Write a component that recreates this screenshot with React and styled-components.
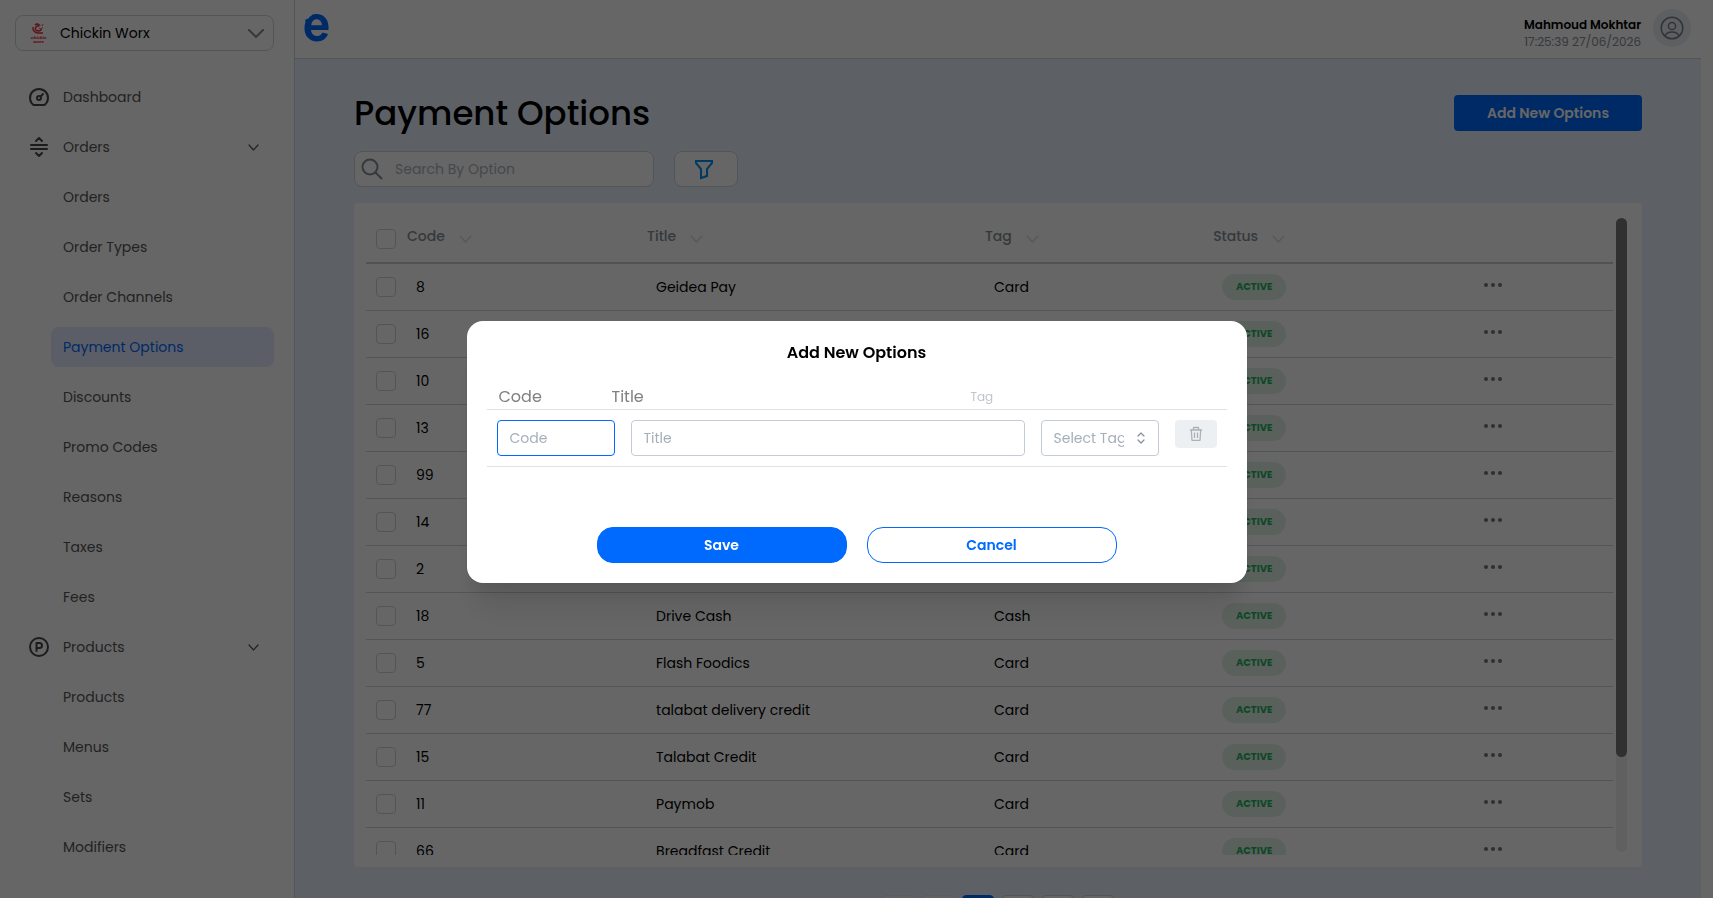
import React from "react";
import styled, { createGlobalStyle } from "styled-components";

const Global = createGlobalStyle`
  *, *::before, *::after { box-sizing: border-box; }
  html, body { margin: 0; background: #fff; }
  body, button, input, select {
    font-family: Poppins, Inter, "Open Sans", sans-serif;
    font-size: 14px;
  }
  button { cursor: pointer; }
`;

const Shell = styled.div`
  display: grid;
  grid-template-columns: 295px minmax(0, 1fr);
  height: 100vh;
  padding-right: 12px;
  overflow: hidden;
  background: #fff;
`;

/* ---------- sidebar ---------- */

const Sidebar = styled.aside`
  padding: 15px 20px 0 15px;
  border-right: 1px solid #ced4da;
  overflow: hidden;
`;

const BrandPicker = styled.button`
  display: flex;
  align-items: center;
  width: 100%;
  height: 36px;
  margin-bottom: 26px;
  padding: 0 9px 0 12px;
  border: 1px solid #ced4da;
  border-radius: 8px;
  background: #fff;
  color: #000;
  text-align: left;
`;

const BrandName = styled.span`
  flex: 1;
  margin-left: 12px;
`;

const Nav = styled.nav`
  display: flex;
  flex-direction: column;
  gap: 10px;
`;

const NavItem = styled.a`
  display: flex;
  align-items: center;
  height: 40px;
  margin-left: ${(p) => (p.$sub ? 36 : 0)}px;
  padding: ${(p) => (p.$sub ? "0 12px" : "0 15px 0 12px")};
  border-radius: 8px;
  background: ${(p) => (p.$active ? "#e3ebff" : "transparent")};
  color: ${(p) => (p.$active ? "#006aff" : "#555555")};
  text-decoration: none;
`;

const NavIcon = styled.span`
  display: flex;
  justify-content: center;
  width: 24px;
  margin-right: 12px;
`;

const NavLabel = styled.span`
  flex: 1;
`;

/* ---------- main column ---------- */

const Main = styled.div`
  display: flex;
  flex-direction: column;
  min-width: 0;
  overflow: hidden;
`;

const TopBar = styled.header`
  display: flex;
  align-items: center;
  flex: none;
  height: 59px;
  padding: 0 10px 0 9px;
  border-bottom: 1px solid #ced4da;
  background: #fff;
`;

const LogoLink = styled.a`
  display: flex;
  flex: 1;
  padding-bottom: 2px;
`;

const UserText = styled.div`
  margin-right: 12px;
  padding-top: 8px;
  text-align: right;
  font-size: 12px;
  line-height: 17px;
`;

const UserName = styled.div`
  font-weight: 600;
  color: #000;
`;

const UserTime = styled.div`
  color: #868e96;
`;

const Avatar = styled.button`
  display: grid;
  place-items: center;
  width: 38px;
  height: 38px;
  margin-bottom: 2px;
  padding: 0;
  border: 0;
  border-radius: 50%;
  background: #e9eef0;
`;

const Content = styled.main`
  flex: 1;
  min-height: 0;
  padding: 36px 59px 0;
  overflow: hidden;
  background: #e9f2ff;
`;

const TitleRow = styled.div`
  display: flex;
  align-items: center;
  justify-content: space-between;
  height: 36px;
  margin-bottom: 20px;
`;

const PageTitle = styled.h1`
  margin: 0;
  font-size: 34px;
  font-weight: 500;
  line-height: 36px;
  color: #000;
`;

const AddButton = styled.button`
  width: 188px;
  height: 36px;
  border: 0;
  border-radius: 4px;
  background: #006aff;
  color: #fff;
  font-weight: 600;
`;

const Tools = styled.div`
  display: flex;
  gap: 20px;
  margin-bottom: 16px;
`;

const SearchBox = styled.label`
  display: flex;
  align-items: center;
  gap: 10px;
  width: 300px;
  height: 36px;
  padding: 0 6px;
  border: 1px solid #ced4da;
  border-radius: 8px;
  background: #fff;
`;

const SearchInput = styled.input`
  flex: 1;
  min-width: 0;
  border: 0;
  outline: 0;
  background: none;
  &::placeholder { color: #adb5bd; opacity: 1; }
`;

const FilterButton = styled.button`
  display: grid;
  place-items: center;
  width: 64px;
  height: 36px;
  padding: 0 4px 0 0;
  border: 1px solid #ced4da;
  border-radius: 8px;
  background: #fff;
`;

const Card = styled.section`
  display: flex;
  gap: 3px;
  height: calc(100vh - 234px);
  padding: 12px 15px 12px 12px;
  border-radius: 4px;
  background: #fff;
`;

const TableArea = styled.div`
  flex: 1;
  min-width: 0;
  overflow: hidden;
`;

const Track = styled.div`
  width: 11px;
  margin: 3px 0;
  border-radius: 6px;
  background: #f1f1f1;
`;

const Thumb = styled.div`
  width: 11px;
  height: 85%;
  border-radius: 6px;
  background: #797979;
`;

const Table = styled.table`
  width: 100%;
  table-layout: fixed;
  border-collapse: separate;
  border-spacing: 0;
  color: #000;
`;

const Col = styled.col`
  width: ${(p) => p.$w};
`;

const Th = styled.th`
  height: 49px;
  padding: ${(p) => (p.$box ? "0 0 0 10px" : "0 0 4px 7px")};
  border-bottom: 2px solid #c8d0d0;
  color: #868e96;
  font-weight: 500;
  text-align: left;
`;

const SortLabel = styled.span`
  display: flex;
  align-items: center;
  gap: 14px;
  svg { margin-top: 5px; }
`;

const Td = styled.td`
  height: 47px;
  padding: 0 0 0 ${(p) => (p.$box ? 10 : 16)}px;
  border-bottom: 1px solid #ced4d6;
  text-align: left;
`;

const ActionTd = styled(Td)`
  padding: 0 0 5px;
  text-align: center;
`;

const Checkbox = styled.input.attrs({ type: "checkbox" })`
  display: block;
  appearance: none;
  width: 20px;
  height: 20px;
  margin: 0;
  border: 1px solid #ced4da;
  border-radius: 4px;
  background: #fff;
`;

const Pill = styled.span`
  display: inline-flex;
  align-items: center;
  justify-content: center;
  width: 64px;
  height: 26px;
  border-radius: 13px;
  background: #e2f2e7;
  color: #22b45e;
  font-size: 10px;
  font-weight: 700;
  vertical-align: middle;
`;

const DotsButton = styled.button`
  display: flex;
  margin: 0 auto;
  padding: 4px;
  border: 0;
  background: none;
`;

const Pager = styled.nav`
  display: flex;
  justify-content: center;
  gap: 8px;
  margin-top: 28px;
`;

const PageButton = styled.button`
  width: 32px;
  height: 32px;
  padding: 0;
  border: 1px solid ${(p) => (p.$active ? "#006aff" : "#ced4da")};
  border-radius: 4px;
  background: ${(p) => (p.$active ? "#006aff" : "#fff")};
  color: ${(p) => (p.$active ? "#fff" : "#000")};
  &:disabled { opacity: 0.4; }
`;

/* ---------- modal ---------- */

const Overlay = styled.div`
  position: fixed;
  inset: 0;
  display: grid;
  place-items: center;
  padding-top: 6px;
  background: rgba(0, 0, 0, 0.6);
`;

const Dialog = styled.form`
  width: 780px;
  max-width: calc(100vw - 40px);
  padding: 20px;
  border-radius: 16px;
  background: #fff;
  box-shadow: 0 1px 3px rgba(0, 0, 0, 0.05), 0 36px 28px -7px rgba(0, 0, 0, 0.08),
    0 17px 17px -7px rgba(0, 0, 0, 0.08);
`;

const DialogTitle = styled.h2`
  margin: 0 0 9px;
  font-size: 16px;
  font-weight: 600;
  line-height: 24px;
  text-align: center;
  color: #000;
`;

const FieldHeads = styled.div`
  display: grid;
  grid-template-columns: 113fr 359fr 256fr;
  align-items: center;
  height: 36px;
  padding: 10px 0 0 12px;
  border-bottom: 1px solid #dee2e6;
  font-size: 16px;
  color: #808080;
`;

const SmallHead = styled.label`
  font-size: 12px;
  color: #c1c5c9;
`;

const FieldRow = styled.div`
  display: grid;
  grid-template-columns: 118px minmax(0, 1fr) 118px 42px;
  gap: 16px;
  padding: 10px;
  border-bottom: 1px solid #dee2e6;
`;

const TextField = styled.input`
  width: 100%;
  height: 36px;
  padding: 0 12px;
  border: 1px solid ${(p) => (p.$focused ? "#006aff" : "#c3ccd4")};
  border-radius: 4px;
  outline: 0;
  background: #fff;
  &::placeholder { color: #a5afb9; opacity: 1; }
`;

const SelectWrap = styled.div`
  position: relative;
  height: 36px;
`;

const TagSelect = styled.select`
  appearance: none;
  width: 100%;
  height: 36px;
  padding: 0 34px 0 12px;
  border: 1px solid #c3ccd4;
  border-radius: 4px;
  background: #fff;
  color: #a5afb9;
  text-overflow: clip;
`;

const SelectArrows = styled.svg`
  position: absolute;
  top: 12px;
  right: 14px;
  pointer-events: none;
`;

const DeleteButton = styled.button`
  display: grid;
  place-items: center;
  height: 28px;
  padding: 0;
  border: 0;
  border-radius: 4px;
  background: #edf0f3;
`;

const Actions = styled.div`
  display: flex;
  justify-content: center;
  gap: 20px;
  margin-top: 60px;
`;

const ActionButton = styled.button`
  width: 250px;
  height: 36px;
  border: 1px solid #006aff;
  border-radius: 16px;
  background: ${(p) => (p.$primary ? "#006aff" : "#fff")};
  color: ${(p) => (p.$primary ? "#fff" : "#006aff")};
  font-weight: 600;
`;

/* ---------- drawings ---------- */

const Chevron = ({ w, h, color, sw = 1 }) => (
  <svg width={w} height={h} viewBox={`0 0 ${w} ${h}`} fill="none" stroke={color} strokeWidth={sw} strokeLinecap="round" strokeLinejoin="round" aria-hidden="true">
    <path d={`M1 1 L${w / 2} ${h - 1} L${w - 1} 1`} />
  </svg>
);

const BrandMark = () => (
  <svg width="20" height="22" viewBox="0 0 20 22" fill="none" stroke="#f0283c" aria-hidden="true">
    <path d="M7 3 C9 1 11 2 10.500 4 C8 3.500 6.500 6 8 8 C9.500 9.500 12.500 9.500 13.500 7" strokeWidth="1.500" />
    <path d="M5 5 C4.500 8.500 7 11 10 11 L15 11" strokeWidth="1.400" />
    <path d="M11 6 L13 7 L15 5 M12 4 L11.500 2 M14 4 L15 2" strokeWidth="0.800" />
    <text x="10.500" y="16.500" textAnchor="middle" fontSize="4" fontWeight="700" fontStyle="italic" fill="#f0283c" stroke="none">Chickin</text>
    <text x="10.500" y="21" textAnchor="middle" fontSize="4" fontWeight="700" fontStyle="italic" fill="#f0283c" stroke="none">Worx</text>
  </svg>
);

const DashIcon = () => (
  <svg width="22" height="22" viewBox="0 0 22 22" fill="none" stroke="#484848" strokeWidth="2" strokeLinecap="round" strokeLinejoin="round" aria-hidden="true">
    <path d="M5.500 19 A9 9 0 1 1 16.500 19 Z" />
    <circle cx="11" cy="12" r="2" />
    <path d="M12.500 10.500 L15 8" />
  </svg>
);

const OrdersIcon = () => (
  <svg width="20" height="22" viewBox="0 0 20 22" fill="none" stroke="#484848" strokeWidth="2" strokeLinecap="round" strokeLinejoin="round" aria-hidden="true">
    <path d="M2 9 H18 M2 13 H18 M7 5 L10 2 L13 5 M7 17 L10 20 L13 17" />
  </svg>
);

const ProductsIcon = () => (
  <svg width="22" height="22" viewBox="0 0 22 22" fill="none" stroke="#484848" strokeWidth="2" strokeLinecap="round" strokeLinejoin="round" aria-hidden="true">
    <circle cx="11" cy="11" r="9" />
    <path d="M8.500 15 V7 H11.500 A2.500 2.500 0 0 1 11.500 12 H8.500" />
  </svg>
);

const Logo = () => (
  <svg width="25" height="28" viewBox="0 0 25 28" aria-hidden="true">
    <path
      fill="#006aff"
      fillRule="evenodd"
      d="M6 2.500 C7.500 2 8 0.500 10 0.300 C12 -0.200 15 0 17.500 1 C22 3 24.500 7.500 24.500 13 V16 H7 C7.500 20 10 22 13.500 22 C16 22 17 20.500 18.500 18.500 L24 20 C22.500 24.500 18.500 27.500 13 27.500 C5.500 27.500 0.500 22 0.500 14.500 C0.500 12 0.800 10 1.500 8 C0.800 6.500 1.500 5 3 5 C4.500 5 5 3.500 6 2.500 Z M7.200 11.300 H18 C17.700 7.500 15.500 5.300 12.500 5.300 C9.500 5.300 7.700 7.800 7.200 11.300 Z"
    />
  </svg>
);

const UserIcon = () => (
  <svg width="24" height="24" viewBox="0 0 24 24" fill="none" stroke="#7b8190" strokeWidth="1.500" aria-hidden="true">
    <circle cx="12" cy="12" r="10.800" />
    <circle cx="12" cy="10" r="3.600" />
    <path d="M5 20 C6.500 14.500 17.500 14.500 19 20" />
  </svg>
);

const SearchIcon = () => (
  <svg width="22" height="22" viewBox="0 0 22 22" fill="none" stroke="#868e96" strokeWidth="2" strokeLinecap="round" aria-hidden="true">
    <circle cx="9" cy="9" r="7.500" />
    <path d="M14.500 14.500 L20.500 20.500" />
  </svg>
);

const FilterIcon = () => (
  <svg width="20" height="22" viewBox="0 0 20 22" fill="none" stroke="#0090f5" strokeWidth="2" strokeLinejoin="miter" aria-hidden="true">
    <path d="M2 3 H18 V5 L13 11 V18 L7 20 V11 L2 5 Z" />
  </svg>
);

const Dots = () => (
  <svg width="18" height="4" viewBox="0 0 18 4" fill="#6f7880" aria-hidden="true">
    <circle cx="2" cy="2" r="2" />
    <circle cx="9" cy="2" r="2" />
    <circle cx="16" cy="2" r="2" />
  </svg>
);

const TrashIcon = () => (
  <svg width="14" height="16" viewBox="0 0 14 16" fill="none" stroke="#a9b2ba" strokeWidth="1.300" strokeLinejoin="round" aria-hidden="true">
    <path d="M1 4 H13 M2.300 4 L3 14.300 H11 L11.700 4 M4.500 4 V1.500 H9.500 V4 M5.500 6.500 V12 M8.500 6.500 V12" />
  </svg>
);

/* ---------- data ---------- */

const NAV = [
  { label: "Dashboard", icon: <DashIcon /> },
  { label: "Orders", icon: <OrdersIcon />, open: true },
  { label: "Orders", sub: true },
  { label: "Order Types", sub: true },
  { label: "Order Channels", sub: true },
  { label: "Payment Options", sub: true, active: true },
  { label: "Discounts", sub: true },
  { label: "Promo Codes", sub: true },
  { label: "Reasons", sub: true },
  { label: "Taxes", sub: true },
  { label: "Fees", sub: true },
  { label: "Products", icon: <ProductsIcon />, open: true },
  { label: "Products", sub: true },
  { label: "Menus", sub: true },
  { label: "Sets", sub: true },
  { label: "Modifiers", sub: true },
];

const ROWS = [
  ["8", "Geidea Pay", "Card"],
  ["16", "", "Card"],
  ["10", "", "Card"],
  ["13", "", "Card"],
  ["99", "", "Card"],
  ["14", "", "Card"],
  ["2", "", "Card"],
  ["18", "Drive Cash", "Cash"],
  ["5", "Flash Foodics", "Card"],
  ["77", "talabat delivery credit", "Card"],
  ["15", "Talabat Credit", "Card"],
  ["11", "Paymob", "Card"],
  ["66", "Breadfast Credit", "Card"],
];

export default function App() {
  return (
    <>
      <Global />
      <Shell>
        <Sidebar>
          <BrandPicker type="button">
            <BrandMark />
            <BrandName>Chickin Worx</BrandName>
            <Chevron w={16} h={9} color="#868e96" sw={2} />
          </BrandPicker>
          <Nav aria-label="Main">
            {NAV.map((n, i) => (
              <NavItem key={i} href="#" $sub={n.sub} $active={n.active}>
                {n.icon && <NavIcon>{n.icon}</NavIcon>}
                <NavLabel>{n.label}</NavLabel>
                {n.open && <Chevron w={11} h={7} color="#555555" sw={1.2} />}
              </NavItem>
            ))}
          </Nav>
        </Sidebar>

        <Main>
          <TopBar>
            <LogoLink href="#" aria-label="Home"><Logo /></LogoLink>
            <UserText>
              <UserName>Mahmoud Mokhtar</UserName>
              <UserTime>17:25:39 27/06/2026</UserTime>
            </UserText>
            <Avatar type="button" aria-label="Account"><UserIcon /></Avatar>
          </TopBar>

          <Content>
            <TitleRow>
              <PageTitle>Payment Options</PageTitle>
              <AddButton type="button">Add New Options</AddButton>
            </TitleRow>
            <Tools>
              <SearchBox>
                <SearchIcon />
                <SearchInput placeholder="Search By Option" aria-label="Search By Option" />
              </SearchBox>
              <FilterButton type="button" aria-label="Filter"><FilterIcon /></FilterButton>
            </Tools>

            <Card>
              <TableArea>
                <Table>
                  <colgroup>
                    <Col $w="34px" />
                    <Col $w="19.25%" />
                    <Col $w="27.1%" />
                    <Col $w="18.3%" />
                    <Col $w="13.4%" />
                    <Col />
                  </colgroup>
                  <thead>
                    <tr>
                      <Th $box><Checkbox aria-label="Select all" /></Th>
                      {["Code", "Title", "Tag", "Status"].map((h) => (
                        <Th key={h}>
                          <SortLabel>{h}<Chevron w={13} h={8} color="#dadee2" sw={1.5} /></SortLabel>
                        </Th>
                      ))}
                      <Th />
                    </tr>
                  </thead>
                  <tbody>
                    {ROWS.map(([code, title, tag]) => (
                      <tr key={code}>
                        <Td $box><Checkbox aria-label={`Select ${code}`} /></Td>
                        <Td>{code}</Td>
                        <Td>{title}</Td>
                        <Td>{tag}</Td>
                        <Td><Pill>ACTIVE</Pill></Td>
                        <ActionTd>
                          <DotsButton type="button" aria-label="Row actions"><Dots /></DotsButton>
                        </ActionTd>
                      </tr>
                    ))}
                  </tbody>
                </Table>
              </TableArea>
              <Track><Thumb /></Track>
            </Card>

            <Pager aria-label="Pages">
              <PageButton type="button" disabled>«</PageButton>
              <PageButton type="button" disabled>‹</PageButton>
              <PageButton type="button" $active>1</PageButton>
              <PageButton type="button">2</PageButton>
              <PageButton type="button">›</PageButton>
              <PageButton type="button">»</PageButton>
            </Pager>
          </Content>
        </Main>
      </Shell>

      <Overlay>
        <Dialog role="dialog" aria-labelledby="dialog-title">
          <DialogTitle id="dialog-title">Add New Options</DialogTitle>
          <FieldHeads>
            <label htmlFor="code">Code</label>
            <label htmlFor="title">Title</label>
            <SmallHead htmlFor="tag">Tag</SmallHead>
          </FieldHeads>
          <FieldRow>
            <TextField id="code" placeholder="Code" $focused />
            <TextField id="title" placeholder="Title" />
            <SelectWrap>
              <TagSelect id="tag" defaultValue="">
                <option value="">Select Tag</option>
                <option value="card">Card</option>
                <option value="cash">Cash</option>
              </TagSelect>
              <SelectArrows width="8" height="12" viewBox="0 0 8 12" fill="none" stroke="#868e96" strokeWidth="1.200" strokeLinecap="round" strokeLinejoin="round" aria-hidden="true">
                <path d="M1 4 L4 1 L7 4 M1 8 L4 11 L7 8" />
              </SelectArrows>
            </SelectWrap>
            <DeleteButton type="button" aria-label="Delete row"><TrashIcon /></DeleteButton>
          </FieldRow>
          <Actions>
            <ActionButton type="button" $primary>Save</ActionButton>
            <ActionButton type="button">Cancel</ActionButton>
          </Actions>
        </Dialog>
      </Overlay>
    </>
  );
}
